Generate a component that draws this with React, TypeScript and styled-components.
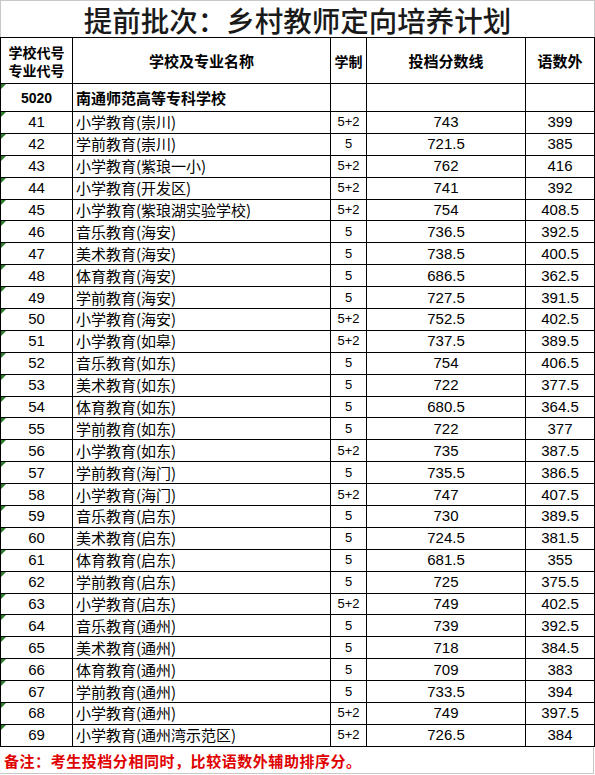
import React from 'react';
import styled, { createGlobalStyle } from 'styled-components';

const GlobalStyle = createGlobalStyle`
  html, body {
    margin: 0;
    padding: 0;
    background: #fff;
  }
  body {
    font-family: "Liberation Sans", "Noto Sans CJK SC", sans-serif;
    color: #000;
  }
`;

interface IRow {
  code: string
  name: string
  term: string
  score: string
  extra: string
}

const rows: IRow[] = [
  { code: '41', name: '小学教育(崇川)', term: '5+2', score: '743', extra: '399' },
  { code: '42', name: '学前教育(崇川)', term: '5', score: '721.5', extra: '385' },
  { code: '43', name: '小学教育(紫琅一小)', term: '5+2', score: '762', extra: '416' },
  { code: '44', name: '小学教育(开发区)', term: '5+2', score: '741', extra: '392' },
  { code: '45', name: '小学教育(紫琅湖实验学校)', term: '5+2', score: '754', extra: '408.5' },
  { code: '46', name: '音乐教育(海安)', term: '5', score: '736.5', extra: '392.5' },
  { code: '47', name: '美术教育(海安)', term: '5', score: '738.5', extra: '400.5' },
  { code: '48', name: '体育教育(海安)', term: '5', score: '686.5', extra: '362.5' },
  { code: '49', name: '学前教育(海安)', term: '5', score: '727.5', extra: '391.5' },
  { code: '50', name: '小学教育(海安)', term: '5+2', score: '752.5', extra: '402.5' },
  { code: '51', name: '小学教育(如皋)', term: '5+2', score: '737.5', extra: '389.5' },
  { code: '52', name: '音乐教育(如东)', term: '5', score: '754', extra: '406.5' },
  { code: '53', name: '美术教育(如东)', term: '5', score: '722', extra: '377.5' },
  { code: '54', name: '体育教育(如东)', term: '5', score: '680.5', extra: '364.5' },
  { code: '55', name: '学前教育(如东)', term: '5', score: '722', extra: '377' },
  { code: '56', name: '小学教育(如东)', term: '5+2', score: '735', extra: '387.5' },
  { code: '57', name: '学前教育(海门)', term: '5', score: '735.5', extra: '386.5' },
  { code: '58', name: '小学教育(海门)', term: '5+2', score: '747', extra: '407.5' },
  { code: '59', name: '音乐教育(启东)', term: '5', score: '730', extra: '389.5' },
  { code: '60', name: '美术教育(启东)', term: '5', score: '724.5', extra: '381.5' },
  { code: '61', name: '体育教育(启东)', term: '5', score: '681.5', extra: '355' },
  { code: '62', name: '学前教育(启东)', term: '5', score: '725', extra: '375.5' },
  { code: '63', name: '小学教育(启东)', term: '5+2', score: '749', extra: '402.5' },
  { code: '64', name: '音乐教育(通州)', term: '5', score: '739', extra: '392.5' },
  { code: '65', name: '美术教育(通州)', term: '5', score: '718', extra: '384.5' },
  { code: '66', name: '体育教育(通州)', term: '5', score: '709', extra: '383' },
  { code: '67', name: '学前教育(通州)', term: '5', score: '733.5', extra: '394' },
  { code: '68', name: '小学教育(通州)', term: '5+2', score: '749', extra: '397.5' },
  { code: '69', name: '小学教育(通州湾示范区)', term: '5+2', score: '726.5', extra: '384' },
];

const Sheet = styled.div`
  width: 595px;
`;

const Table = styled.table`
  width: 594px;
  border-collapse: collapse;
  table-layout: fixed;
`;

const TitleCell = styled.td`
  height: 34px;
  padding: 2px 0 0;
  border: 1px solid #c8c8c8;
  border-bottom: 1px solid #000;
  text-align: center;
  font-family: "Noto Sans CJK SC", sans-serif;
  font-size: 28.5px;
  font-weight: 500;
  line-height: 32px;
  color: #1a1a1a;
`;

const HeadCell = styled.th<{ $small?: boolean }>`
  height: 45px;
  padding: 0;
  border: 1px solid #000;
  text-align: center;
  vertical-align: middle;
  font-family: "Noto Sans CJK SC", sans-serif;
  font-size: ${props => (props.$small ? '14px' : '15px')};
  font-weight: 700;
  line-height: 18px;
`;

const CodeLine = styled.span`
  display: block;
  font-size: 14px;
  line-height: 18px;
`;

const Row = styled.tr<{ $h: number }>`
  height: ${props => props.$h}px;
`;

const Cell = styled.td<{ $bold?: boolean; $size?: number }>`
  position: relative;
  padding: 0;
  border: 1px solid #000;
  text-align: center;
  vertical-align: middle;
  font-family: "Liberation Sans", "Noto Sans CJK SC", sans-serif;
  font-size: ${props => props.$size || 15}px;
  font-weight: ${props => (props.$bold ? 700 : 400)};
  line-height: 18px;
  white-space: nowrap;
  overflow: hidden;
`;

const NameCell = styled(Cell)`
  padding-left: 3px;
  text-align: left;
  font-family: "Noto Sans CJK SC", sans-serif;
`;

const Flag = styled.span`
  position: absolute;
  left: 0;
  top: 0;
  width: 0;
  height: 0;
  border-top: 5px solid #2d7a2d;
  border-right: 5px solid transparent;
`;

const Note = styled.div`
  width: 589px;
  height: 26px;
  padding-left: 4px;
  border-right: 1px solid #c8c8c8;
  border-bottom: 1px solid #c8c8c8;
  font-family: "Noto Sans CJK SC", sans-serif;
  font-size: 15px;
  font-weight: 700;
  letter-spacing: 0.55px;
  line-height: 27px;
  color: #e00000;
`;

const App = () => {
  return (
    <Sheet>
      <GlobalStyle />
      <Table>
        <colgroup>
          <col style={{ width: 72 }} />
          <col style={{ width: 258 }} />
          <col style={{ width: 36 }} />
          <col style={{ width: 159 }} />
          <col style={{ width: 69 }} />
        </colgroup>
        <tbody>
          <tr>
            <TitleCell colSpan={5}>提前批次：乡村教师定向培养计划</TitleCell>
          </tr>
          <tr>
            <HeadCell>
              <CodeLine>学校代号</CodeLine>
              <CodeLine>专业代号</CodeLine>
            </HeadCell>
            <HeadCell>学校及专业名称</HeadCell>
            <HeadCell $small>学制</HeadCell>
            <HeadCell>投档分数线</HeadCell>
            <HeadCell>语数外</HeadCell>
          </tr>
          <Row $h={28}>
            <Cell $bold $size={14}>
              <Flag />
              5020
            </Cell>
            <NameCell $bold>南通师范高等专科学校</NameCell>
            <Cell />
            <Cell />
            <Cell />
          </Row>
          {rows.map(row => (
            <Row key={row.code} $h={21.9}>
              <Cell>
                <Flag />
                {row.code}
              </Cell>
              <NameCell>{row.name}</NameCell>
              <Cell $size={13}>{row.term}</Cell>
              <Cell>{row.score}</Cell>
              <Cell>{row.extra}</Cell>
            </Row>
          ))}
        </tbody>
      </Table>
      <Note>备注：考生投档分相同时，比较语数外辅助排序分。</Note>
    </Sheet>
  );
};

export default App;
